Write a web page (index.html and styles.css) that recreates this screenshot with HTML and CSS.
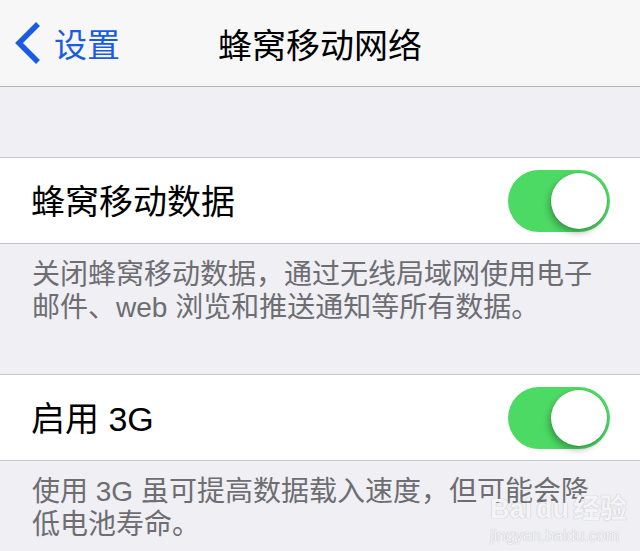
FILE: index.html
```html
<!DOCTYPE html>
<html lang="zh-CN">

<head>
    <meta charset="UTF-8">
    <meta name="viewport" content="width=device-width, initial-scale=1.0">
    <title>蜂窝移动网络</title>
    <link rel="stylesheet" href="styles.css">
</head>

<body>
    <header class="nav">
        <a class="back" href="#">
            <svg class="chevron" width="28" height="44" viewBox="0 0 28 44">
                <polyline points="24,3 5,22 24,41" />
            </svg>
            <span>设置</span>
        </a>
        <h1 class="title">蜂窝移动网络</h1>
        <div></div>
    </header>

    <main class="settings">
        <section class="group">
            <div class="cell">
                <span class="label">蜂窝移动数据</span>
                <span class="switch on"><span class="knob"></span></span>
            </div>
            <p class="note">关闭蜂窝移动数据，通过无线局域网使用电子邮件、web 浏览和推送通知等所有数据。</p>
        </section>

        <section class="group">
            <div class="cell">
                <span class="label">启用 3G</span>
                <span class="switch on"><span class="knob"></span></span>
            </div>
            <p class="note">使用 3G 虽可提高数据载入速度，但可能会降低电池寿命。</p>
        </section>
    </main>

    <!-- 水印 -->
    <div class="watermark" aria-hidden="true">
        <div class="wm-logo">Bai<span class="wm-du">du</span>经验</div>
        <div class="wm-url">jingyan.baidu.com</div>
    </div>
</body>

</html>
```

FILE: styles.css
```css
html {
    overflow: hidden;
}

body {
    margin: 0;
    width: 640px;
    height: 551px;
    overflow: hidden;
    background-color: #efeff4;
    font-family: "Liberation Sans", "Noto Sans CJK SC", sans-serif;
    position: relative;
}

.nav {
    height: 86px;
    background-color: #f7f7f8;
    border-bottom: 1px solid #b2b2b2;
    display: grid;
    grid-template-columns: 1fr auto 1fr;
    align-items: center;
}

.back {
    display: flex;
    align-items: center;
    padding-left: 14px;
    color: #1a5be3;
    text-decoration: none;
    font-size: 33px;
}

.chevron polyline {
    fill: none;
    stroke: #1a5be3;
    stroke-width: 5.5;
}

.back span {
    margin-left: 12px;
}

.title {
    margin: 0;
    font-size: 34px;
    font-weight: normal;
    color: #000;
}

.settings {
    padding-top: 70px;
}

.cell {
    height: 85px;
    background-color: #fff;
    border-top: 1px solid #c8c7cc;
    border-bottom: 1px solid #c8c7cc;
    display: flex;
    align-items: center;
    justify-content: space-between;
    padding: 0 30px 0 31px;
}

.label {
    font-size: 34px;
    color: #000;
    margin-top: -3px;
}

.switch {
    width: 102px;
    height: 62px;
    border-radius: 31px;
    background-color: #4cd964;
    display: flex;
    align-items: center;
    justify-content: flex-end;
    padding-right: 3px;
    box-sizing: border-box;
}

.knob {
    width: 56px;
    height: 56px;
    border-radius: 50%;
    background-color: #fff;
    box-shadow: 0 0 0 0.5px rgba(0, 0, 0, 0.12), -2px 4px 6px rgba(0, 0, 0, 0.28);
}

.note {
    margin: 0;
    padding: 14px 38px 50px 32px;
    font-size: 28px;
    line-height: 33px;
    color: #6d6d72;
}

.group:last-child .note {
    padding-bottom: 0;
}

.watermark {
    position: absolute;
    left: 490px;
    top: 496px;
    color: #f4f4f7;
    text-shadow: 0 0 1px #c4c4c9, 0 0 1px #c4c4c9;
    line-height: 1;
    pointer-events: none;
}

.wm-logo {
    font-size: 27px;
    font-weight: bold;
}

.wm-du {
    margin: 0 4px;
}

.wm-url {
    margin-top: 5px;
    font-size: 16px;
}
```
